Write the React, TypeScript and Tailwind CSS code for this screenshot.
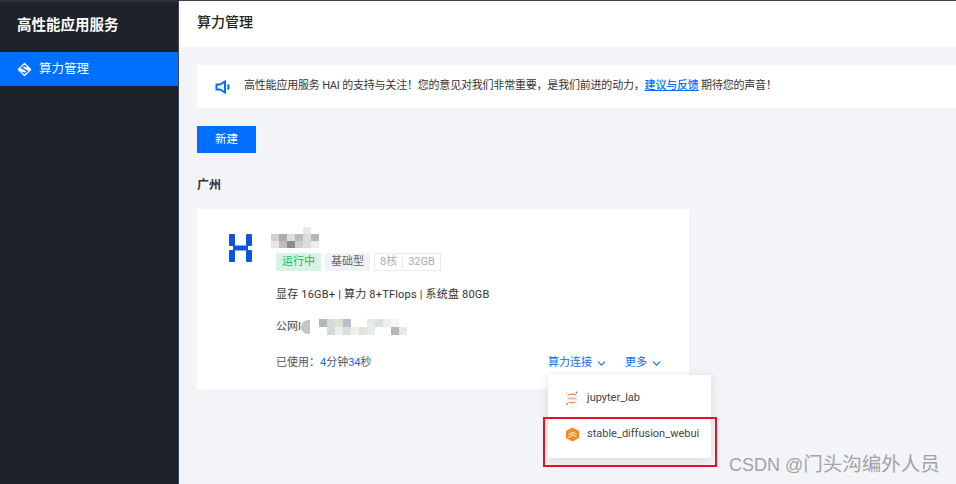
import { ChevronDown } from 'lucide-react';

const nameMosaic = [
  ['bg-transparent', 'bg-transparent', 'bg-transparent', 'bg-transparent', 'bg-[#e8e8e6]', 'bg-transparent'],
  ['bg-[#d3cfcd]', 'bg-[#a9aca8]', 'bg-[#dcdfe0]', 'bg-[#b3bcc1]', 'bg-[#dcdcda]', 'bg-[#b4b8b2]'],
  ['bg-[#e8e6e6]', 'bg-[#bfbcbc]', 'bg-[#8f8b90]', 'bg-[#cfcdd0]', 'bg-[#dcdcdc]', 'bg-[#eceeec]'],
];

const ipMosaic = [
  ['bg-[#b4b8b2]', 'bg-[#d8dad8]', 'bg-[#dfdfd2]', 'bg-[#b5c0c6]', 'bg-white', 'bg-white', 'bg-[#e4e9ea]', 'bg-[#dfe0da]', 'bg-[#eef0ee]', 'bg-[#f6f6f6]', 'bg-white'],
  ['bg-white', 'bg-[#d6d8dd]', 'bg-[#eceef0]', 'bg-[#dcdfe2]', 'bg-[#f0f0ee]', 'bg-[#e6e4d8]', 'bg-[#e9ebec]', 'bg-white', 'bg-white', 'bg-[#b8b8b8]', 'bg-[#e8e8e8]'],
];

const Mosaic = ({ rows, size }: { rows: string[][]; size: string }) => (
  <div className="flex flex-col">
    {rows.map((row, i) => (
      <div key={i} className="flex">
        {row.map((c, j) => (
          <div key={j} className={`${size} ${c}`} />
        ))}
      </div>
    ))}
  </div>
);

const Tag = ({ className, children }: { className: string; children: React.ReactNode }) => (
  <span className={`flex h-[18px] items-center px-[6px] text-[11px] ${className}`}>{children}</span>
);

const App = () => {
  return (
    <div className="relative flex h-[484px] w-[956px] overflow-hidden bg-[#f3f4f8] font-['Roboto','Noto_Sans_CJK_SC',sans-serif] text-[#333]">
      <aside className="h-full w-[179px] shrink-0 border-r border-t-2 border-[#3c4350] border-t-[#2a303c] bg-[#1e222d]">
        <div className="flex h-[50px] items-center pb-[2px] pl-[17px] text-[14.500px] font-bold text-white">高性能应用服务</div>
        <div className="flex h-[34px] items-center gap-[7px] bg-[#006eff] pl-[17px] text-[12.500px] text-white">
          <svg width="15" height="15" viewBox="0 0 15 15">
            <path d="M7.500 .5 14.500 7.500 7.500 14.500 .5 7.500z" fill="white" />
            <path d="M9.800 5 7.500 3.500 4.500 5.800 10.500 9.200 7.500 11.500 5.200 10" fill="none" stroke="#006eff" strokeWidth="1.300" />
          </svg>
          算力管理
        </div>
      </aside>

      <main className="min-w-0 flex-1">
        <header className="flex h-[47px] items-center border-t border-[#3c4350] bg-white pb-[3px] pl-[18px] text-[14px] font-medium text-[#222]">
          算力管理
        </header>

        <div className="pl-[18px] pt-[18px]">
          <div className="flex h-[43px] items-center bg-white pl-[18px] text-[11px] text-[#333]">
            <svg width="16" height="16" viewBox="0 0 16 16" fill="none" stroke="#006eff" strokeWidth="2" className="mr-[13px]">
              <path d="M1.500 5.500h3.500L10 2.500v11L5 10.500H1.500z" />
              <path d="M12.800 5.500c1 1.500 1 3.500 0 5" />
            </svg>
            <span className="whitespace-nowrap tracking-[-0.2px]">
              高性能应用服务 HAI 的支持与关注！您的意见对我们非常重要，是我们前进的动力，
              <a className="font-medium text-[#006eff] underline">建议与反馈</a> 期待您的声音！
            </span>
          </div>

          <button className="mt-[18px] flex h-[27px] w-[59px] items-center justify-center bg-[#006eff] text-[11.500px] text-white">
            新建
          </button>

          <h2 className="mt-[24px] text-[12px] font-bold leading-[16px] text-[#333]">广州</h2>

          <section className="mt-[16px] flex h-[180px] w-[492px] bg-white pl-[32px] pt-[25px]">
            <svg width="23" height="28" viewBox="0 0 23 28" className="shrink-0" fill="#0b55e0">
              <rect x="0" y="0" width="6" height="12" rx="1" />
              <rect x="17" y="0" width="6" height="12" rx="1" />
              <rect x="0" y="16" width="6" height="12" rx="1" />
              <rect x="17" y="16" width="6" height="12" rx="1" />
              <rect x="4" y="11.500" width="15" height="5" />
            </svg>

            <div className="ml-[24px] flex-1 pr-[26px]">
              <div className="-mt-[7px] ml-[-5px]">
                <Mosaic rows={nameMosaic} size="h-[7px] w-[8px]" />
              </div>
              <div className="mt-[5px] flex gap-[4px]">
                <Tag className="bg-[#d8f3e3] text-[#0abf5b]">运行中</Tag>
                <Tag className="bg-[#f0f2f6] text-[#666]">基础型</Tag>
                <span className="flex h-[18px] items-center border border-[#e7eaef] text-[11px] text-[#a5abb8]">
                  <span className="border-r border-[#e7eaef] px-[5px] leading-[12px]">8核</span>
                  <span className="px-[5px]">32GB</span>
                </span>
              </div>
              <p className="mt-[16px] whitespace-nowrap text-[11px] leading-[16px] tracking-[0.2px]">
                显存 16GB+ | 算力 8+TFlops | 系统盘 80GB
              </p>
              <div className="mt-[16px] flex h-[16px] items-center text-[11px] text-[#444]">
                公网I
                <div className="h-[14px] w-[9px] rounded-l-full bg-[#c4c4c4]" />
                <div className="ml-[9px]">
                  <Mosaic rows={ipMosaic} size="h-[8px] w-[8px]" />
                </div>
              </div>
              <div className="mt-[20px] flex items-center justify-between text-[11px] leading-[16px]">
                <span className="text-[#555]">
                  已使用：<span className="text-[#006eff]">4</span>分钟<span className="text-[#006eff]">34</span>秒
                </span>
                <span className="flex items-center gap-[17px] text-[#0f6fe8]">
                  <span className="flex items-center gap-[3px]">算力连接<ChevronDown size={13} strokeWidth={2} /></span>
                  <span className="flex items-center gap-[3px]">更多<ChevronDown size={13} strokeWidth={2} /></span>
                </span>
              </div>
            </div>
          </section>
        </div>
      </main>

      {/* dropdown over the card */}
      <div className="absolute left-[548px] top-[375px] flex h-[83px] w-[163px] flex-col bg-white pt-[5px] text-[11px] text-[#444] shadow-[0_2px_10px_rgba(0,0,0,0.12)]">
        <div className="flex h-[36px] items-center gap-[8px] pl-[17px]">
          <svg width="14" height="15" viewBox="0 0 14 15" fill="none">
            <path d="M2 5C3.500 1.800 10.500 1.800 12 5C10 3.300 4 3.300 2 5Z" fill="#f37726" />
            <path d="M2 10C3.500 13.200 10.500 13.200 12 10C10 11.700 4 11.700 2 10Z" fill="#f37726" />
            <rect x="2.500" y="6.500" width="9" height="2" fill="#c9c9c9" />
            <circle cx="11.500" cy="1.500" r="0.900" fill="#777" />
            <circle cx="2" cy="13" r="0.900" fill="#888" />
            <circle cx="1.500" cy="2" r="0.600" fill="#999" />
          </svg>
          jupyter_lab
        </div>
        <div className="flex h-[36px] items-center gap-[7px] pl-[17px]">
          <svg width="15" height="15" viewBox="0 0 15 15">
            <path d="M7.500 .5 14 4v7l-6.500 3.500L1 11V4z" fill="#f7891f" />
            <path d="M3.500 8 7.500 5.500 11.500 7M3.500 10.500 7.500 8 11.500 9.500" stroke="#ffe3c4" strokeWidth="1.200" fill="none" />
          </svg>
          stable_diffusion_webui
        </div>
      </div>

      {/* annotation box */}
      <div className="absolute left-[543px] top-[417px] h-[50px] w-[174px] border-2 border-[#e81123]" />

      {/* watermark */}
      <div className="absolute left-[729px] top-[452px] flex items-baseline whitespace-nowrap font-['Liberation_Sans','Noto_Sans_CJK_SC',sans-serif] text-[18px] leading-[24px] text-[#a3a3a3]">
        CSDN @<span className="text-[19.500px]">门头沟编外人员</span>
      </div>
    </div>
  );
};

export default App;
